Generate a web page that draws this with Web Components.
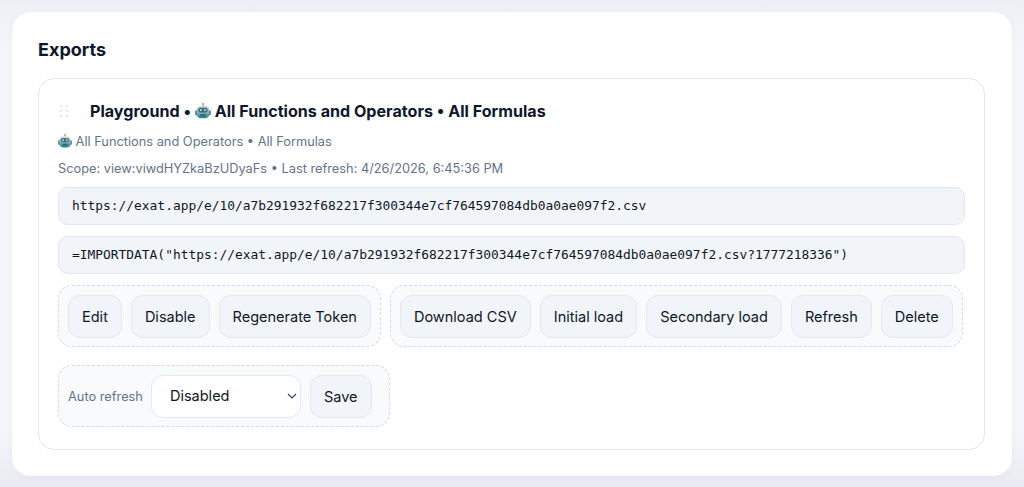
<!DOCTYPE html>
<html>
<head>
<meta charset="utf-8">
<style>
  html, body { height: 100%; }
  body {
    margin: 0;
    padding: 12px;
    box-sizing: border-box;
    overflow: hidden;
    background: linear-gradient(180deg, #eceff4 0, #f4f6fa 50px, #f4f6fa 430px, #e9ebf2 100%);
    font-family: Inter, "Liberation Sans", sans-serif;
  }
</style>
</head>
<body>
<exports-panel heading="Exports">
  <export-card>
    <span slot="title">Playground • <robot-icon size="16"></robot-icon> All Functions and Operators • All Formulas</span>
    <span slot="subtitle"><robot-icon size="14"></robot-icon> All Functions and Operators • All Formulas</span>
    <span slot="meta">Scope: view:viwdHYZkaBzUDyaFs • Last refresh: 4/26/2026, 6:45:36 PM</span>
    <code-line>https://exat.app/e/10/a7b291932f682217f300344e7cf764597084db0a0ae097f2.csv</code-line>
    <code-line>=IMPORTDATA("https://exat.app/e/10/a7b291932f682217f300344e7cf764597084db0a0ae097f2.csv?1777218336")</code-line>
    <div slot="actions" style="display:flex;flex-direction:column;gap:18px">
      <div style="display:flex;gap:9px">
        <action-group>
          <action-button>Edit</action-button>
          <action-button>Disable</action-button>
          <action-button>Regenerate Token</action-button>
        </action-group>
        <action-group>
          <action-button>Download CSV</action-button>
          <action-button>Initial load</action-button>
          <action-button>Secondary load</action-button>
          <action-button>Refresh</action-button>
          <action-button>Delete</action-button>
        </action-group>
      </div>
      <div style="display:flex">
        <action-group style="padding-right:17px">
          <refresh-select></refresh-select>
          <action-button>Save</action-button>
        </action-group>
      </div>
    </div>
  </export-card>
</exports-panel>

<script>
class ExportsPanel extends HTMLElement {
  constructor() {
    super();
    this.attachShadow({ mode: "open" });
    this.shadowRoot.innerHTML = `
      <style>
        :host {
          display: block;
          box-sizing: border-box;
          width: 1000px;
          height: 464px;
          padding: 23px 26px 26px 25px;
          background: #fff;
          border: 1px solid #fafbfd;
          border-radius: 18px;
          box-shadow: 0 2px 10px rgba(15, 23, 42, .03);
        }
        h2 {
          margin: 0 0 15px;
          font-size: 18px;
          line-height: 27px;
          font-weight: 700;
          color: #0f172a;
        }
      </style>
      <h2></h2>
      <slot></slot>`;
  }
  connectedCallback() {
    this.shadowRoot.querySelector("h2").textContent = this.getAttribute("heading");
  }
}
customElements.define("exports-panel", ExportsPanel);

class ExportCard extends HTMLElement {
  constructor() {
    super();
    this.attachShadow({ mode: "open" });
    this.shadowRoot.innerHTML = `
      <style>
        :host {
          display: block;
          box-sizing: border-box;
          height: 372px;
          padding: 18px 19px 0;
          border: 1px solid #e2e8f0;
          border-radius: 16px;
        }
        .head { display: flex; align-items: center; height: 28px; }
        .grip { width: 32px; flex: none; display: flex; }
        .title { font-size: 16.1px; font-weight: 700; line-height: 28px; color: #0f172a; white-space: nowrap; }
        .sub { margin-top: 7px; font-size: 12.8px; line-height: 20px; color: #64748b; }
        .meta { margin-top: 8px; font-size: 12.8px; line-height: 18px; color: #64748b; }
        .lines { display: flex; flex-direction: column; gap: 11px; margin-top: 9px; }
        .actions { margin-top: 11px; }
      </style>
      <div class="head">
        <div class="grip">
          <svg width="12" height="14" viewBox="0 0 12 14" fill="#e2e6ee">
            <rect x="2" y="1" width="2" height="2"/><rect x="8" y="1" width="2" height="2"/>
            <rect x="2" y="6" width="2" height="2"/><rect x="8" y="6" width="2" height="2"/>
            <rect x="2" y="11" width="2" height="2"/><rect x="8" y="11" width="2" height="2"/>
          </svg>
        </div>
        <div class="title"><slot name="title"></slot></div>
      </div>
      <div class="sub"><slot name="subtitle"></slot></div>
      <div class="meta"><slot name="meta"></slot></div>
      <div class="lines"><slot></slot></div>
      <div class="actions"><slot name="actions"></slot></div>`;
  }
}
customElements.define("export-card", ExportCard);

class RobotIcon extends HTMLElement {
  constructor() {
    super();
    this.attachShadow({ mode: "open" });
    this.shadowRoot.innerHTML = `
      <style>
        :host { display: inline-block; vertical-align: -2px; line-height: 0; }
      </style>
      <svg viewBox="0 0 20 20">
        <defs>
          <linearGradient id="b" x1="0" y1="0" x2="0" y2="1">
            <stop offset="0" stop-color="#d5dbe0"/>
            <stop offset=".5" stop-color="#8fb2ba"/>
            <stop offset="1" stop-color="#17808f"/>
          </linearGradient>
        </defs>
        <rect x="9.2" y="0.5" width="1.6" height="3" fill="#8b979d"/>
        <circle cx="10" cy="1.2" r="1.2" fill="#e8925f"/>
        <rect x="0.2" y="9" width="2.6" height="6.5" rx="1.3" fill="#3f8794"/>
        <rect x="17.2" y="9" width="2.6" height="6.5" rx="1.3" fill="#3f8794"/>
        <rect x="2" y="3.4" width="16" height="15.8" rx="5.5" fill="url(#b)"/>
        <rect x="4.2" y="6" width="11.6" height="5.8" rx="2.8" fill="#456673"/>
        <circle cx="7.4" cy="8.9" r="1.4" fill="#8fe6ee"/>
        <circle cx="12.6" cy="8.9" r="1.4" fill="#8fe6ee"/>
        <rect x="6.5" y="14" width="7" height="2.6" rx="1" fill="#2a5f6c"/>
      </svg>`;
  }
  connectedCallback() {
    const s = this.getAttribute("size");
    const svg = this.shadowRoot.querySelector("svg");
    svg.setAttribute("width", s);
    svg.setAttribute("height", s);
  }
}
customElements.define("robot-icon", RobotIcon);

class CodeLine extends HTMLElement {
  constructor() {
    super();
    this.attachShadow({ mode: "open" });
    this.shadowRoot.innerHTML = `
      <style>
        :host {
          display: block;
          box-sizing: border-box;
          height: 38px;
          padding: 0 13px;
          background: #f1f5f9;
          border: 1px solid #e2e8f0;
          border-radius: 10px;
          font-family: "DejaVu Sans Mono", monospace;
          font-size: 12.9px;
          line-height: 36px;
          color: #0f172a;
          white-space: nowrap;
        }
      </style>
      <slot></slot>`;
  }
}
customElements.define("code-line", CodeLine);

class ActionGroup extends HTMLElement {
  constructor() {
    super();
    this.attachShadow({ mode: "open" });
    this.shadowRoot.innerHTML = `
      <style>
        :host {
          display: flex;
          align-items: center;
          gap: 9px;
          box-sizing: border-box;
          height: 62px;
          padding: 0 9px;
          background: #f8fafc;
          border: 1px dashed #d3d9e8;
          border-radius: 14px;
        }
      </style>
      <slot></slot>`;
  }
}
customElements.define("action-group", ActionGroup);

class ActionButton extends HTMLElement {
  constructor() {
    super();
    this.attachShadow({ mode: "open" });
    this.shadowRoot.innerHTML = `
      <style>
        :host {
          display: block;
          box-sizing: border-box;
          height: 43px;
          padding: 0 13px;
          background: #f1f5f9;
          border: 1px solid #e2e8f0;
          border-radius: 12px;
          font-size: 14.52px;
          line-height: 42px;
          color: #0f172a;
          white-space: nowrap;
        }
      </style>
      <slot></slot>`;
  }
}
customElements.define("action-button", ActionButton);

class RefreshSelect extends HTMLElement {
  constructor() {
    super();
    this.attachShadow({ mode: "open" });
    this.shadowRoot.innerHTML = `
      <style>
        :host { display: flex; align-items: center; gap: 8px; }
        label { font-size: 12.8px; color: #64748b; white-space: nowrap; }
        .box {
          display: flex;
          align-items: center;
          justify-content: space-between;
          box-sizing: border-box;
          width: 150px;
          height: 43px;
          padding: 0 3px 0 18px;
          background: #fff;
          border: 1px solid #e2e8f0;
          border-radius: 12px;
          font-size: 14.52px;
          color: #0f172a;
        }
      </style>
      <label>Auto refresh</label>
      <div class="box">
        <span>Disabled</span>
        <svg width="10" height="6" viewBox="0 0 10 6" fill="none" stroke="#334155" stroke-width="1.2"><path d="M1 1l4 4 4-4"/></svg>
      </div>`;
  }
}
customElements.define("refresh-select", RefreshSelect);
</script>
</body>
</html>
